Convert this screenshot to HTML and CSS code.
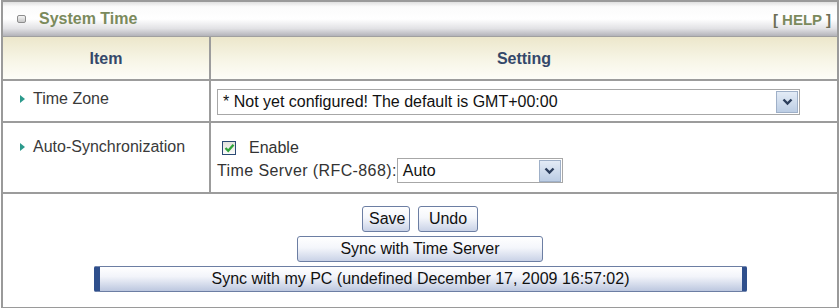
FILE: index.html
```html
<!DOCTYPE html>
<html lang="en">
  <head>
    <meta charset="UTF-8" />
    <title>System Time</title>
    <link rel="stylesheet" href="styles.css">
  </head>
  <body>
    <div class="panel">
      <!-- title bar -->
      <div class="title-bar">
        <div class="title">
          <span class="title-icon"></span>
          <span>System Time</span>
        </div>
        <a class="help" href="#"><span class="bracket">[</span> HELP <span class="bracket">]</span></a>
      </div>

      <table class="settings">
        <tr class="head-row">
          <th class="col-item">Item</th>
          <th>Setting</th>
        </tr>
        <tr class="row-zone">
          <td class="label"><span class="arrow"></span>Time Zone</td>
          <td class="value">
            <div class="select select-zone">
              <span class="select-text">* Not yet configured! The default is GMT+00:00</span>
              <span class="select-btn"><svg width="11" height="8" viewBox="0 0 11 8"><path d="M1.5 1.5 L5.5 5.5 L9.5 1.5" fill="none" stroke="#2c3e5c" stroke-width="2.4"/></svg></span>
            </div>
          </td>
        </tr>
        <tr class="row-sync">
          <td class="label"><span class="arrow"></span>Auto-Synchronization</td>
          <td class="value">
            <div class="check-line">
              <span class="checkbox"><svg width="11" height="10" viewBox="0 0 11 10"><path d="M1.5 5 L4.2 7.8 L9.5 1.8" fill="none" stroke="#2fa43a" stroke-width="2.3"/></svg></span>
              <span>Enable</span>
            </div>
            <div class="server-line">
              <span class="server-label">Time Server (RFC-868):</span>
              <div class="select select-server">
                <span class="select-text">Auto</span>
                <span class="select-btn"><svg width="11" height="8" viewBox="0 0 11 8"><path d="M1.5 1.5 L5.5 5.5 L9.5 1.5" fill="none" stroke="#2c3e5c" stroke-width="2.4"/></svg></span>
              </div>
            </div>
          </td>
        </tr>
      </table>

      <div class="actions">
        <div class="btn-row">
          <button class="btn btn-save">Save</button>
          <button class="btn btn-undo">Undo</button>
        </div>
        <button class="btn btn-server">Sync with Time Server</button>
        <button class="btn btn-pc">Sync with my PC (undefined December 17, 2009 16:57:02)</button>
      </div>
    </div>
  </body>
</html>
```

FILE: styles.css
```css
body {
  margin: 0;
  padding: 0;
  background: #fff;
  font-family: "Liberation Sans", Arial, sans-serif;
  font-size: 16px;
  color: #333;
}

.panel {
  box-sizing: border-box;
  width: 838px;
  height: 308px;
  margin-left: 1px;
  border: 2px solid #9a9a9a;
  border-bottom-width: 1px;
}

/* title bar */
.title-bar {
  height: 34px;
  display: flex;
  align-items: center;
  justify-content: space-between;
  padding: 0 6px 0 14px;
  background: linear-gradient(to bottom, #e0e0e0 0%, #fbfbfb 14%, #fff 50%, #e2e2e5 78%, #b3b3b9 100%);
  border-bottom: 1px solid #a0a0a0;
}

.title {
  display: flex;
  align-items: center;
  gap: 13px;
  font-weight: bold;
  color: #7b8a5c;
}

.title-icon {
  width: 7px;
  height: 6px;
  border: 1px solid #8d8d8d;
  border-radius: 2px;
  background: linear-gradient(to bottom, #f4f4f4, #c8c8c8);
}

.help {
  font-weight: bold;
  font-size: 15px;
  color: #7b8a5c;
  text-decoration: none;
}

.help .bracket {
  color: #6d6d55;
}

/* table */
.settings {
  width: 100%;
  border-collapse: collapse;
}

.settings th,
.settings td {
  border: 2px solid #9c9c9c;
  padding: 0;
}

.settings tr > :first-child {
  border-left: none;
}

.settings tr > :last-child {
  border-right: none;
}

.head-row th {
  height: 40px;
  padding-top: 2px;
  border-top: none;
  background: linear-gradient(to bottom, #ece7cb, #f7f5e6 55%, #fdfdf8);
  color: #34486a;
  font-weight: bold;
}

.col-item {
  width: 206px;
}

.settings td.label {
  padding-left: 17px;
  color: #3a3a3a;
  vertical-align: top;
}

.arrow {
  display: inline-block;
  width: 0;
  height: 0;
  border-top: 4px solid transparent;
  border-bottom: 4px solid transparent;
  border-left: 5px solid #2c9a8c;
  margin-right: 8px;
  vertical-align: 1px;
}

.settings td.value {
  padding-left: 6px;
}

/* time zone row */
.row-zone td.value {
  height: 38px;
  padding-top: 2px;
  vertical-align: middle;
}

.row-zone td.label {
  height: 31px;
  padding-top: 9px;
}

/* auto sync row */
.row-sync td.label {
  height: 54px;
  padding-top: 15px;
}

.row-sync td.value {
  height: 53px;
  padding-top: 16px;
  vertical-align: top;
}

/* fake select boxes */
.select {
  box-sizing: border-box;
  display: flex;
  align-items: center;
  justify-content: space-between;
  border: 1px solid #a7a7a7;
  background: #fff;
  padding: 1px 1px 1px 5px;
  color: #111;
}

.select-zone {
  width: 583px;
  height: 26px;
}

.select-server {
  width: 166px;
  height: 25px;
}

.select-btn {
  box-sizing: border-box;
  width: 22px;
  height: 22px;
  display: flex;
  align-items: center;
  justify-content: center;
  border: 1px solid #9fb0c8;
  background: linear-gradient(to bottom, #e3ebf6, #bccde4);
}

.check-line {
  display: flex;
  align-items: center;
  gap: 13px;
  padding-left: 5px;
  height: 18px;
}

.checkbox {
  box-sizing: border-box;
  width: 14px;
  height: 14px;
  border: 1px solid #2b4a74;
  background: linear-gradient(to bottom, #e2e2dc, #fbfbfa);
  display: flex;
  align-items: center;
  justify-content: center;
}

.server-line {
  display: flex;
  align-items: center;
  margin-top: 1px;
}

.server-label {
  letter-spacing: 0.4px;
}

/* buttons */
.actions {
  display: flex;
  flex-direction: column;
  align-items: center;
  gap: 4px;
  padding-top: 12px;
}

.btn-row {
  display: flex;
  gap: 8px;
}

.btn {
  box-sizing: border-box;
  height: 26px;
  padding: 0 6px;
  font-family: "Liberation Sans", Arial, sans-serif;
  font-size: 16px;
  color: #111;
  border: 1px solid #6c7ea3;
  border-radius: 3px;
  background: linear-gradient(to bottom, #ffffff 0%, #f4f6fb 45%, #c9d2e7 100%);
}

.btn-save {
  width: 48px;
}

.btn-undo {
  width: 60px;
}

.btn-server {
  width: 246px;
}

.btn-pc {
  width: 653px;
  border-radius: 2px;
  border-left: 6px solid #2f4f8c;
  border-right: 5px solid #2f4f8c;
  background: linear-gradient(to bottom, #ffffff 0%, #f2f4fa 40%, #bcc7df 100%);
}
```
